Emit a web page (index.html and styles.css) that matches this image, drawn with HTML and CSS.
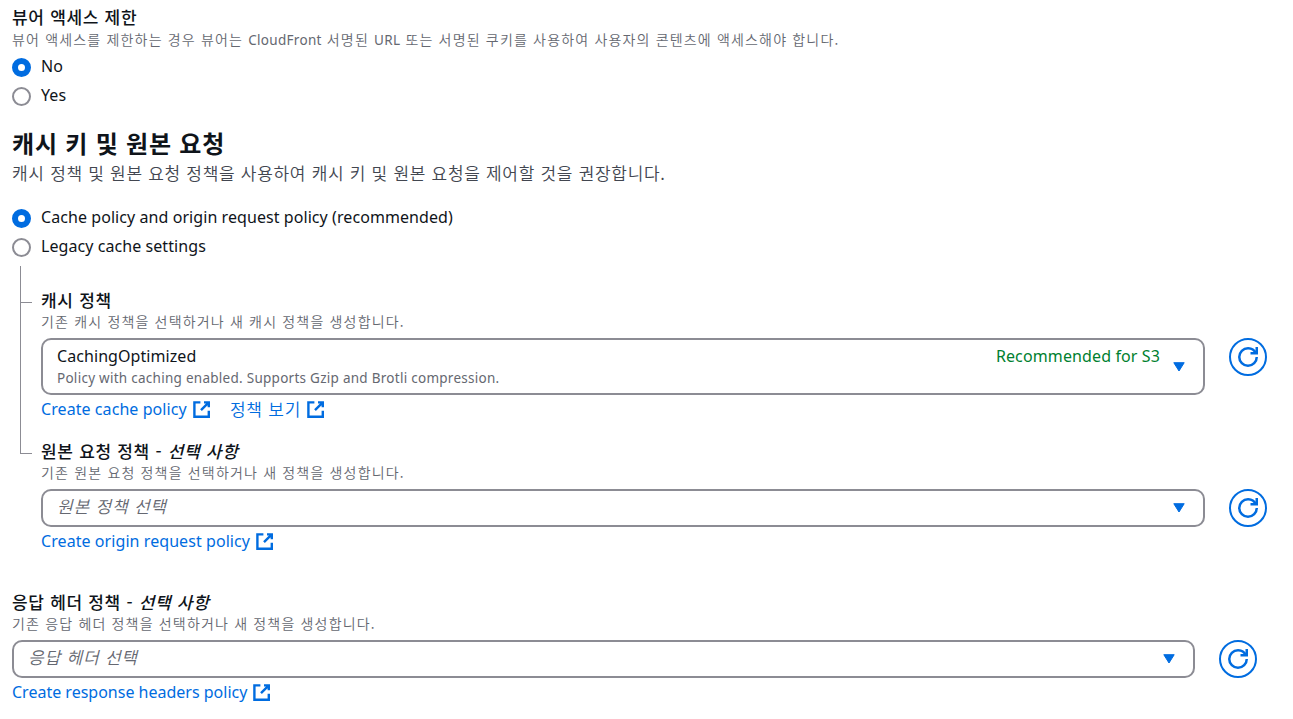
FILE: index.html
```html
<!DOCTYPE html>
<html lang="ko">
<head>
    <meta charset="UTF-8">
    <meta name="viewport" content="width=device-width, initial-scale=1.0">
    <title>CloudFront</title>
    <link rel="stylesheet" href="styles.css">
</head>
<body>
    <!-- Icons -->
    <svg class="sprite" aria-hidden="true">
        <symbol id="icon-external" viewBox="0 0 16 16">
            <path d="M14 9.05V14H2V2h5M10 2h4v4M14 2 7.5 8.5" fill="none" stroke="currentColor" stroke-width="2"/>
        </symbol>
        <symbol id="icon-refresh" viewBox="0 0 16 16">
            <path d="M15 8a7 7 0 0 1-7 7 7 7 0 0 1-7-7 7 7 0 0 1 7-7 6.87 6.87 0 0 1 6.3 4" fill="none" stroke="currentColor" stroke-width="2"/>
            <path d="M10 5h5V0" fill="none" stroke="currentColor" stroke-width="2"/>
        </symbol>
        <symbol id="icon-caret" viewBox="0 0 12 10">
            <path d="M.8 .7h10.4L6 9z" fill="currentColor" stroke="currentColor" stroke-linejoin="round"/>
        </symbol>
    </svg>

    <main class="container">
        <section class="access">
            <div class="label">뷰어 액세스 제한</div>
            <div class="hint">뷰어 액세스를 제한하는 경우 뷰어는 <span class="latin">CloudFront</span> 서명된 <span class="latin">URL</span> 또는 서명된 쿠키를 사용하여 사용자의 콘텐츠에 액세스해야 합니다.</div>
            <div class="radio-group">
                <label class="radio"><input type="radio" name="access" checked><span>No</span></label>
                <label class="radio"><input type="radio" name="access"><span>Yes</span></label>
            </div>
        </section>

        <section class="cache">
            <h2>캐시 키 및 원본 요청</h2>
            <p class="intro">캐시 정책 및 원본 요청 정책을 사용하여 캐시 키 및 원본 요청을 제어할 것을 권장합니다.</p>
            <div class="radio-group">
                <label class="radio"><input type="radio" name="cache" checked><span>Cache policy and origin request policy (recommended)</span></label>
                <label class="radio"><input type="radio" name="cache"><span>Legacy cache settings</span></label>
            </div>

            <div class="tree">
                <div class="branch">
                    <span class="line"></span>
                    <div class="field">
                        <div class="label">캐시 정책</div>
                        <div class="hint">기존 캐시 정책을 선택하거나 새 캐시 정책을 생성합니다.</div>
                        <div class="control">
                            <div class="select select-large">
                                <div class="option">
                                    <div class="option-row"><span class="option-name">CachingOptimized</span><span class="tag">Recommended for S3</span></div>
                                    <div class="option-text">Policy with caching enabled. Supports Gzip and Brotli compression.</div>
                                </div>
                                <svg class="caret"><use href="#icon-caret"/></svg>
                            </div>
                            <button class="refresh" aria-label="새로 고침"><svg><use href="#icon-refresh"/></svg></button>
                        </div>
                        <div class="links">
                            <a href="#"><span>Create cache policy</span><svg><use href="#icon-external"/></svg></a>
                            <a href="#"><span class="korean">정책 보기</span><svg><use href="#icon-external"/></svg></a>
                        </div>
                    </div>
                </div>
                <div class="branch">
                    <span class="line"></span>
                    <div class="field">
                        <div class="label">원본 요청 정책 - <i>선택 사항</i></div>
                        <div class="hint">기존 원본 요청 정책을 선택하거나 새 정책을 생성합니다.</div>
                        <div class="control">
                            <div class="select">
                                <span class="placeholder">원본 정책 선택</span>
                                <svg class="caret"><use href="#icon-caret"/></svg>
                            </div>
                            <button class="refresh" aria-label="새로 고침"><svg><use href="#icon-refresh"/></svg></button>
                        </div>
                        <div class="links">
                            <a href="#"><span>Create origin request policy</span><svg><use href="#icon-external"/></svg></a>
                        </div>
                    </div>
                </div>
            </div>
        </section>

        <section class="headers field">
            <div class="label">응답 헤더 정책 - <i>선택 사항</i></div>
            <div class="hint">기존 응답 헤더 정책을 선택하거나 새 정책을 생성합니다.</div>
            <div class="control">
                <div class="select">
                    <span class="placeholder">응답 헤더 선택</span>
                    <svg class="caret"><use href="#icon-caret"/></svg>
                </div>
                <button class="refresh" aria-label="새로 고침"><svg><use href="#icon-refresh"/></svg></button>
            </div>
            <div class="links">
                <a href="#"><span>Create response headers policy</span><svg><use href="#icon-external"/></svg></a>
            </div>
        </section>
    </main>
</body>
</html>
```
FILE: styles.css
```css
* {
    box-sizing: border-box;
}

body {
    margin: 0;
    background-color: #fff;
    color: #0f141a;
    font-family: "Noto Sans", "Noto Sans CJK KR", sans-serif;
    font-size: 16px;
    line-height: 24px;
    letter-spacing: 0.07px;
    overflow: hidden;
}

.sprite {
    display: none;
}

.container {
    padding: 5px 26px 0 12px;
}

.label {
    height: 24px;
    font-family: "Noto Sans CJK KR", sans-serif;
    font-size: 17px;
    font-weight: 500;
    letter-spacing: 0.7px;
    white-space: nowrap;
}

.hint {
    height: 19px;
    margin-top: 1px;
    color: #656871;
    font-family: "Noto Sans CJK KR", sans-serif;
    font-size: 14px;
    font-weight: 350;
    line-height: 19px;
    letter-spacing: 1.17px;
    white-space: nowrap;
}

.latin {
    font-family: "Noto Sans", sans-serif;
    font-size: 13.5px;
    font-weight: 400;
    letter-spacing: 0.3px;
}

.radio-group {
    display: flex;
    flex-direction: column;
    gap: 5px;
}

.access .radio-group {
    margin-top: 5px;
}

.radio {
    display: flex;
    gap: 10px;
    height: 24px;
}

.radio input {
    appearance: none;
    width: 19px;
    height: 19px;
    margin: 4px 0 0;
    border: 2px solid #8c8c94;
    border-radius: 50%;
    background-color: #fff;
}

.radio input:checked {
    border: 6px solid #006ce0;
}

h2 {
    height: 29px;
    margin: 21px 0 0;
    font-family: "Noto Sans CJK KR", sans-serif;
    font-size: 24px;
    font-weight: 700;
    line-height: 29px;
    letter-spacing: 0.8px;
}

.intro {
    height: 24px;
    margin: 4px 0 20px;
    color: #424650;
    font-family: "Noto Sans CJK KR", sans-serif;
    font-size: 17px;
    font-weight: 350;
    letter-spacing: 0.7px;
}

.tree {
    display: flex;
    flex-direction: column;
    padding: 8px 0 0 8px;
}

.branch {
    display: flex;
    gap: 9px;
}

/* Tree connector on the left of nested fields */
.line {
    width: 12px;
    border-left: 1px solid #8c8c94;
    background: linear-gradient(#8c8c94, #8c8c94) 0 36px / 12px 1px no-repeat;
}

.branch:last-child .line {
    height: 16px;
    border-bottom: 1px solid #8c8c94;
    background: none;
}

.field {
    flex: 1;
}

.field .label {
    margin-top: 1px;
}

.field .hint {
    margin-top: 0;
}

.branch:first-child .field {
    padding: 21px 0 17px;
}

.control {
    display: flex;
    gap: 24px;
    margin-top: 7px;
}

.select {
    flex: 1;
    display: flex;
    align-items: center;
    justify-content: space-between;
    height: 38px;
    padding: 0 18px 0 14px;
    border: 2px solid #8c8c94;
    border-radius: 10px;
}

.select-large {
    height: 57px;
}

.option {
    flex: 1;
    padding: 0 13px 1px 0;
}

.option-row {
    display: flex;
    justify-content: space-between;
    height: 24px;
}

.tag {
    color: #00802f;
    letter-spacing: 0.12px;
}

.option-text {
    margin-top: 1px;
    color: #656871;
    font-size: 13.5px;
    line-height: 19px;
    letter-spacing: 0.27px;
}

.placeholder {
    padding-bottom: 4px;
    color: #656871;
    font-family: "Noto Sans CJK KR", sans-serif;
    font-size: 17px;
    font-style: italic;
    font-weight: 350;
    letter-spacing: 0.8px;
}

.caret {
    width: 12px;
    height: 10px;
    color: #006ce0;
}

.refresh {
    display: flex;
    align-items: center;
    justify-content: center;
    width: 38px;
    height: 38px;
    padding: 0;
    border: 2px solid #006ce0;
    border-radius: 50%;
    background-color: #fff;
    color: #006ce0;
}

.refresh svg {
    width: 20px;
    height: 20px;
}

.links {
    display: flex;
    gap: 19px;
    height: 24px;
    margin-top: 2px;
}

.links a {
    display: flex;
    align-items: center;
    gap: 5px;
    color: #006ce0;
    text-decoration: none;
}

.links svg {
    width: 19.2px;
    height: 19.2px;
    margin-top: 2px;
}

.korean {
    font-family: "Noto Sans CJK KR", sans-serif;
    font-size: 17px;
    font-weight: 350;
    letter-spacing: 0.8px;
}

.headers {
    padding: 36px 10px 0 0;
}

.headers .links {
    letter-spacing: 0;
}
```
